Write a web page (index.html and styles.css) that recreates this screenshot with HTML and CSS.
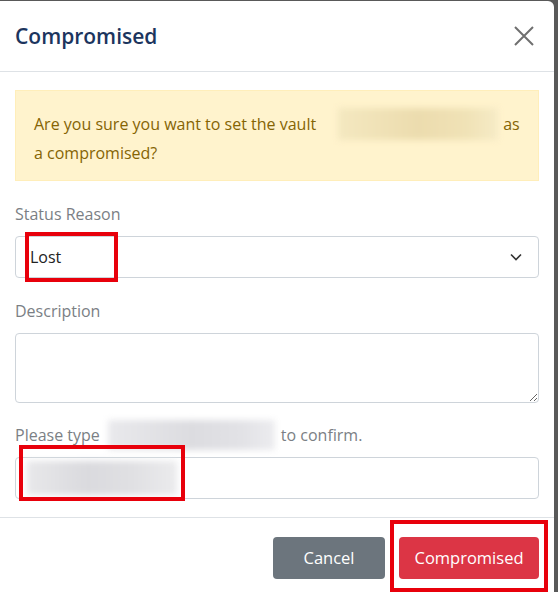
FILE: index.html
```html
<!DOCTYPE html>
<html>
<head>
<meta charset="utf-8">
<link rel="stylesheet" href="styles.css">
</head>
<body>
<div class="modal">
  <div class="modal-header">
    <h5 class="modal-title">Compromised</h5>
    <svg class="close" width="22" height="22" viewBox="0 0 22 22"><path d="M2 2 L20 20 M20 2 L2 20" stroke="#6f6f6f" stroke-width="2" fill="none"/></svg>
  </div>
  <div class="modal-body">
    <div class="alert"><span>Are you sure you want to set the vault</span><span class="blur blur-alert"></span><span>as a compromised?</span></div>
    <label class="label label-first">Status Reason</label>
    <div class="field select">
      <span class="select-value">Lost</span>
      <svg width="14" height="14" viewBox="0 0 14 14"><path d="M2 4.5 L7 9.5 L12 4.5" stroke="#333" stroke-width="1.6" fill="none"/></svg>
      <div class="mark mark-lost"></div>
    </div>
    <label class="label">Description</label>
    <textarea class="field textarea"></textarea>
    <label class="label confirm-label">Please type<span class="blur blur-label"></span>to confirm.</label>
    <div class="field input">
      <span class="blur blur-input"></span>
      <div class="mark mark-input"></div>
    </div>
  </div>
  <div class="modal-footer">
    <button class="btn btn-secondary">Cancel</button>
    <div class="btn-wrap">
      <button class="btn btn-danger">Compromised</button>
      <div class="mark mark-btn"></div>
    </div>
  </div>
</div>
</body>
</html>
```
FILE: styles.css
```css
html, body {
  margin: 0;
  padding: 0;
}
body {
  background: #595959;
  width: 558px;
  height: 592px;
  overflow: hidden;
  font-family: "Open Sans", "Noto Sans", sans-serif;
}
.modal {
  margin-top: 1px;
  width: 554px;
  height: 600px;
  background: #fff;
  border-top-right-radius: 6px;
  box-sizing: border-box;
}
.modal-header {
  height: 71px;
  border-bottom: 1px solid #dee2e6;
  box-sizing: border-box;
  display: flex;
  align-items: center;
  justify-content: space-between;
  padding: 0 15px 0 15px;
}
.modal-title {
  margin: 0;
  font-size: 21px;
  font-weight: 600;
  color: #1c355e;
  padding-bottom: 1px;
}
.close {
  margin-right: 4px;
  margin-top: -1px;
}
.modal-body {
  padding: 18px 15px 18px 15px;
  display: flex;
  flex-direction: column;
}
.alert {
  background: #fff3cd;
  border: 1px solid #ffeeba;
  color: #856404;
  padding: 20px 10px 0 18px;
  font-size: 16px;
  line-height: 26px;
  height: 91px;
  box-sizing: border-box;
}
.blur {
  display: inline-block;
  vertical-align: middle;
  filter: blur(3px);
}
.blur-alert {
  width: 160px;
  height: 32px;
  margin: -4px 5px 0 22px;
  background: linear-gradient(90deg, #f4e8c0, #ecdcae 50%, #f0e2b6 80%, #f6ebc6);
}
.label {
  margin-top: 21px;
  font-size: 16px;
  color: #7b7f85;
  line-height: 24px;
}
.label-first {
  margin-top: 21px;
}
.field {
  margin-top: 10px;
  border: 1px solid #ced4da;
  border-radius: 4px;
  box-sizing: border-box;
  width: 524px;
  position: relative;
}
.select {
  height: 42px;
  display: flex;
  align-items: center;
  justify-content: space-between;
  padding: 0 15px 0 14px;
}
.select-value {
  font-size: 16px;
  color: #222;
}
.textarea {
  height: 70px;
  display: block;
  resize: vertical;
  font-family: inherit;
  margin-bottom: 0;
}
.confirm-label {
  margin-top: 20px;
}
.blur-label {
  width: 167px;
  height: 30px;
  margin: -4px 6px 0 8px;
  background: linear-gradient(90deg, #e9e9ec, #dcdce0 50%, #e2e2e6 80%, #ececef);
}
.input {
  margin-top: 7px;
  height: 42px;
  display: flex;
  align-items: center;
  padding-left: 11px;
}
.blur-input {
  width: 150px;
  height: 34px;
  background: linear-gradient(90deg, #e8e8ea, #dadade 40%, #e0e0e3 70%, #ebebed);
}
.mark {
  position: absolute;
  border: 4px solid #e8000b;
  box-sizing: border-box;
}
.mark-lost {
  left: 9px;
  top: -5px;
  width: 93px;
  height: 50px;
}
.mark-input {
  left: 3px;
  top: -13px;
  width: 166px;
  height: 56px;
}
.modal-footer {
  border-top: 1px solid #dee2e6;
  margin-top: 0;
  display: flex;
  justify-content: flex-end;
  align-items: flex-start;
  gap: 14px;
  padding: 19px 15px 0 0;
  height: 75px;
  box-sizing: border-box;
}
.btn {
  height: 42px;
  border: none;
  border-radius: 4px;
  color: #fff;
  font-family: inherit;
  font-size: 16.5px;
  padding: 0 10px;
}
.btn-secondary {
  background: #6c757d;
  width: 112px;
}
.btn-danger {
  background: #dc3545;
  width: 140px;
}
.btn-wrap {
  position: relative;
  display: flex;
}
.mark-btn {
  left: -9px;
  top: -17px;
  width: 158px;
  height: 72px;
}
```
